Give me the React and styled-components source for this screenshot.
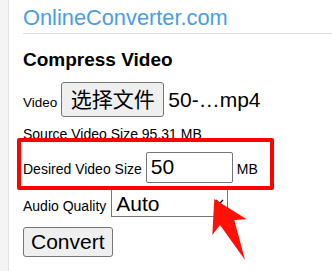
import styled, { createGlobalStyle } from 'styled-components'

const GlobalStyle = createGlobalStyle`
    html, body {
        margin: 0;
        padding: 0;
        background: #fff;
    }
    body {
        font-family: "Liberation Sans", "Noto Sans CJK SC", Arial, sans-serif;
        color: #000;
    }
`

const fontStack = `"Liberation Sans", "Noto Sans CJK SC", Arial, sans-serif`

const Page = styled.div`
    position: relative;
    display: flex;
    min-height: 100vh;
    overflow: hidden;
`

const Sidebar = styled.div`
    flex: none;
    width: 8px;
    background: #f4f4f4;
    border-right: 1px solid #e2e2e2;
`

const Main = styled.div`
    flex: 1;
    padding-left: 14px;
`

const Header = styled.div`
    padding: 6px 0 3px;
    border-bottom: 1px solid #dcdcdc;
`

const Logo = styled.div`
    font-size: 21.8px;
    line-height: 24px;
    color: #4a9de6;
`

const Title = styled.h2`
    margin: 14.5px 0 0;
    font-size: 19px;
    line-height: 21px;
    font-weight: bold;
`

const Row = styled.div`
    display: flex;
    align-items: baseline;
    gap: ${p => p.$gap}px;
    margin-top: ${p => p.$top}px;
`

const Label = styled.span`
    font-size: ${p => p.$size || 14}px;
    line-height: 16px;
`

const SourceText = styled.div`
    margin-top: 9px;
    font-size: 14px;
    line-height: 16px;
`

const FileButton = styled.button`
    height: 35px;
    padding: 0 8.5px;
    font-family: ${fontStack};
    font-size: 21px;
    line-height: 33px;
    color: #000;
    background: #efefef;
    border: 1px solid #767676;
    border-radius: 3px;
`

const FileName = styled.span`
    font-size: 21px;
`

// red annotation frame drawn round the size row
const Highlight = styled.div`
    position: relative;
    z-index: 1;
    width: 257px;
    box-sizing: border-box;
    margin: -4px 0 0 -6px;
    padding: 10px 0 3px 2px;
    border: 4px solid #ff0000;
    border-radius: 2px;
`

const SizeInput = styled.input`
    width: 87px;
    height: 31px;
    box-sizing: border-box;
    padding: 0 4px 2px;
    font-family: ${fontStack};
    font-size: 21px;
    color: #000;
    border: 1px solid #767676;
    border-radius: 2px;
    outline: none;
`

const SelectWrap = styled.div`
    position: relative;
    display: inline-block;
`

const Select = styled.select`
    appearance: none;
    width: 117px;
    height: 31px;
    box-sizing: border-box;
    padding: 3px 4px 0;
    font-family: ${fontStack};
    font-size: 21px;
    color: #000;
    background: #fff;
    border: 1px solid #767676;
    border-radius: 0;
`

const Chevron = styled.svg`
    position: absolute;
    right: 4px;
    top: 13px;
    pointer-events: none;
`

const ConvertButton = styled.button`
    display: block;
    margin-top: 10px;
    height: 30px;
    padding: 0 7px;
    font-family: ${fontStack};
    font-size: 21px;
    line-height: 28px;
    color: #000;
    background: #efefef;
    border: 1px solid #767676;
    border-radius: 3px;
`

const Pointer = styled.svg`
    position: absolute;
    left: 205px;
    top: 190px;
    z-index: 2;
`

export default function App() {
    return (
        <>
            <GlobalStyle />
            <Page>
                <Sidebar />
                <Main>
                    <Header>
                        <Logo>OnlineConverter.com</Logo>
                    </Header>
                    <Title>Compress Video</Title>
                    <Row $gap={4} $top={12.5}>
                        <Label $size={13.5}>Video</Label>
                        <FileButton>选择文件</FileButton>
                        <FileName>50-…mp4</FileName>
                    </Row>
                    <SourceText>Source Video Size 95.31 MB</SourceText>
                    <Highlight>
                        <Row $gap={4} $top={0}>
                            <Label>Desired Video Size</Label>
                            <SizeInput defaultValue="50" />
                            <Label>MB</Label>
                        </Row>
                    </Highlight>
                    <Row $gap={5} $top={-4}>
                        <Label>Audio Quality</Label>
                        <SelectWrap>
                            <Select defaultValue="auto">
                                <option value="auto">Auto</option>
                            </Select>
                            <Chevron width="9" height="6" viewBox="0 0 9 6">
                                <path d="M1 1l3.5 3.5L8 1" fill="none" stroke="#000" strokeWidth="1.3" />
                            </Chevron>
                        </SelectWrap>
                    </Row>
                    <ConvertButton>Convert</ConvertButton>
                </Main>
                <Pointer width="50" height="75" viewBox="0 0 50 75">
                    <polygon points="9.3,9 41.7,29.3 29.3,30 40,70 15,35 7.3,45" fill="#ff1108" />
                </Pointer>
            </Page>
        </>
    )
}
